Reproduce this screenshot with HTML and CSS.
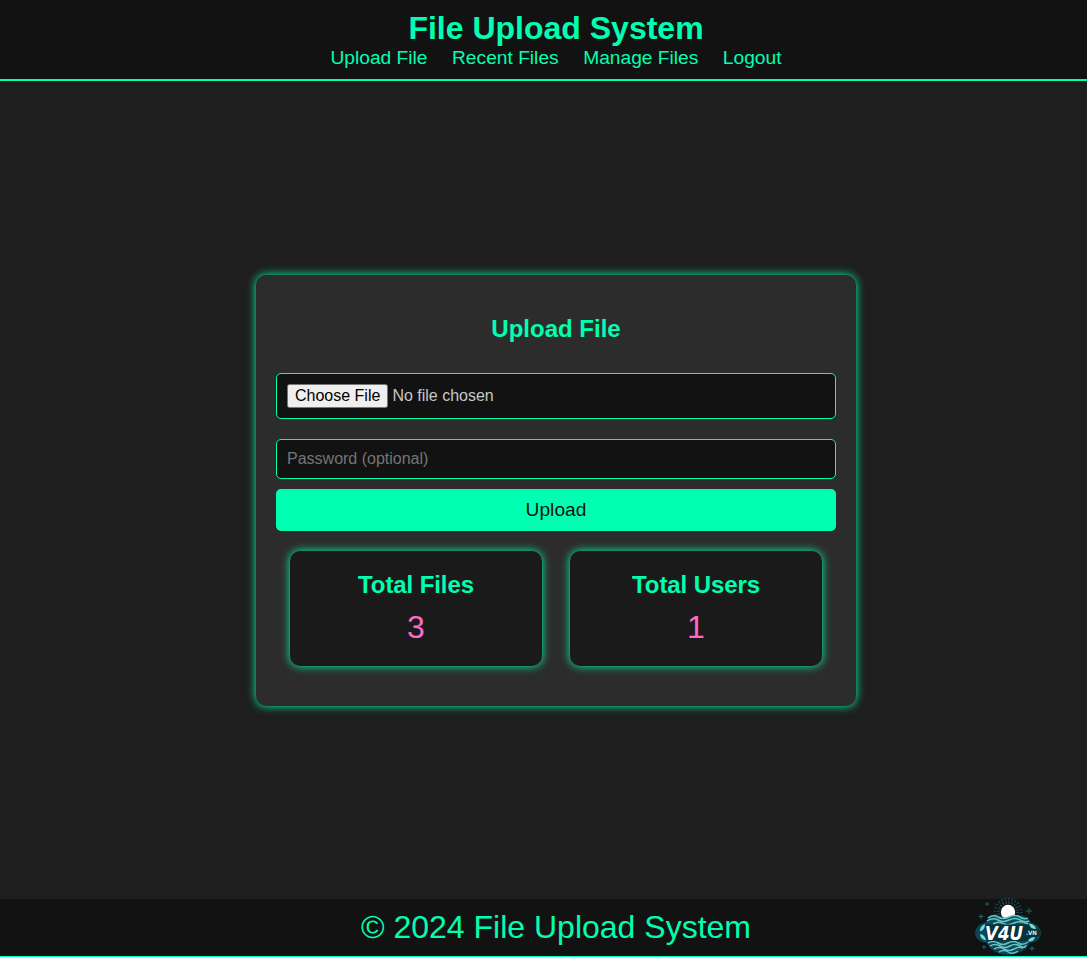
FILE: index.html
```html
<!DOCTYPE html>
<html lang="en">
<head>
<meta charset="utf-8">
<title>File Upload System</title>
<link rel="stylesheet" href="styles.css">
</head>
<body>
<div class="page">
  <header class="header">
    <h1 class="title">File Upload System</h1>
    <nav class="nav">
      <a href="#">Upload File</a>
      <a href="#">Recent Files</a>
      <a href="#">Manage Files</a>
      <a href="#">Logout</a>
    </nav>
  </header>
  <main class="main">
    <section class="card">
      <h2 class="card-title">Upload File</h2>
      <form class="form">
        <input class="field file" type="file">
        <input class="field password" type="password" placeholder="Password (optional)">
        <button class="submit" type="button">Upload</button>
      </form>
      <div class="stats">
        <div class="stat"><h3 class="stat-title">Total Files</h3><p class="stat-value">3</p></div>
        <div class="stat"><h3 class="stat-title">Total Users</h3><p class="stat-value">1</p></div>
      </div>
    </section>
  </main>
  <footer class="footer">
    <p class="copyright">© 2024 File Upload System</p>
    <svg class="logo" viewBox="0 0 68 60" width="68" height="60">
      <g fill="none" stroke="#1c626b" stroke-width="1">
        <circle cx="34" cy="16" r="9.500" stroke-width="2" stroke-dasharray="1.2 1.8"/>
        <circle cx="34" cy="16" r="13" stroke-width="3" stroke-dasharray="1 2.400" stroke="#15505a"/>
        <path d="M13 6v4M11 8h4M7 18v5M4.500 20.500h5M55 12v6M52 15h6M10 49v4M8 51h4M58 50v5M55.500 52.500h5"/>
      </g>
      <path d="M14 22 Q20 17 26 20 Q34 15 42 20 Q48 17 54 22 L56 26 Q67 29 67 37 Q67 45 56 47 Q50 58 34 59 Q18 58 13 47 Q1 45 1 37 Q1 29 12 26Z" fill="#0b4652"/>
      <circle cx="34" cy="16" r="7.200" fill="#fff"/>
      <path d="M13 24 Q18 18 24 21 T35 21 T46 21 T56 24 V29 H13Z" fill="#0c4d59"/>
      <g fill="none" stroke="#67c3c6" stroke-width="1.500">
        <path d="M14 22 Q19 18 24 21 T35 21 T46 21 T54 22"/>
        <path d="M13 25 Q19 21 24 24 T35 24 T46 24 T55 25"/>
        <path d="M19 28 Q24 25 29 27.500 T40 27 T54 28"/>
        <path d="M14 47 Q19 44 24 47 T34 47 T44 47 T54 46"/>
        <path d="M16 50 Q21 47 26 50 T36 50 T46 50 T52 49"/>
        <path d="M20 53 Q25 50 30 53 T40 53 T49 52"/>
        <path d="M25 56 Q30 53 34 56 T44 55"/>
      </g>
      <path d="M12 28.500H53L66 34V40L52 45H13Z" fill="#08333d"/>
      <g fill="#7fd8da">
        <path d="M11 28 Q5.500 30 6 35.500 Q11 34 11 28Z"/>
        <path d="M6 38 Q6 43 12 44.500 Q11 38.500 6 38Z"/>
        <path d="M55 27.500 Q61 28 62 33 Q56 33 55 27.500Z"/>
        <path d="M54 45.500 Q55 41 61 41 Q60 46 54 45.500Z"/>
      </g>
      <text class="logo-name" x="11" y="44" textLength="38" lengthAdjust="spacingAndGlyphs">V4U</text>
      <text class="logo-tld" x="52" y="39" textLength="11" lengthAdjust="spacingAndGlyphs">.VN</text>
    </svg>
  </footer>
</div>
</body>
</html>
```
FILE: styles.css
```css
* { box-sizing: border-box; }
html { overflow: hidden; }
body {
  margin: 0;
  overflow: hidden;
  background: #1e1e1e;
  color: #c7c7c7;
  font-family: Arial, "Liberation Sans", sans-serif;
}
.page {
  display: flex;
  flex-direction: column;
  width: 1112px;
  height: 958px;
}
.header {
  height: 81px;
  padding-top: 10px;
  background: #121212;
  border-bottom: 2px solid #00ffb0;
  text-align: center;
}
.title {
  margin: 0;
  color: #00ffb0;
  font-size: 32px;
  line-height: 36px;
}
.nav {
  display: flex;
  justify-content: center;
  gap: 24.5px;
  font-size: 19.2px;
  line-height: 23px;
}
.nav a { color: #00ffb0; text-decoration: none; }
.main {
  flex: 1;
  display: flex;
  justify-content: center;
  align-items: flex-start;
  padding-top: 194px;
}
.card {
  width: 600px;
  height: 431px;
  padding: 40px 20px;
  background: #2c2c2c;
  border-radius: 10px;
  box-shadow: 0 0 10px #00ffb0;
}
.card-title {
  margin: 0 0 31px;
  color: #00ffb0;
  font-size: 24px;
  line-height: 27px;
  text-align: center;
}
.form { display: flex; flex-direction: column; }
.field {
  width: 100%;
  margin: 0;
  padding: 10px;
  background: #121212;
  border: 1px solid #00ffb0;
  border-radius: 5px;
  color: #c7c7c7;
  font: 16px Arial, "Liberation Sans", sans-serif;
}
.file { height: 46px; margin-bottom: 20px; }
.password { height: 40px; margin-bottom: 10px; }
.password::placeholder { color: #757575; }
.submit {
  height: 42px;
  padding: 0;
  border: 0;
  border-radius: 5px;
  background: #00ffb0;
  color: #121212;
  font: 19.2px Arial, "Liberation Sans", sans-serif;
}
.stats {
  display: flex;
  justify-content: space-around;
  margin-top: 20px;
}
.stat {
  width: 252px;
  height: 115px;
  padding: 20px;
  background: #1a1a1a;
  border-radius: 10px;
  box-shadow: 0 0 10px #00ffb0;
  text-align: center;
}
.stat-title {
  margin: 0 0 11px;
  color: #00ffb0;
  font-size: 24px;
  line-height: 27px;
  letter-spacing: -0.1px;
}
.stat-value {
  margin: 0;
  color: #ff69c4;
  font-size: 32px;
  line-height: 37px;
}
.footer {
  position: relative;
  height: 59px;
  padding-top: 10px;
  background: #121212;
  border-bottom: 2px solid #00ffb0;
  text-align: center;
}
.copyright {
  margin: 0;
  color: #00ffb0;
  font-size: 32px;
  line-height: 36px;
}
.logo { position: absolute; left: 974px; top: -3px; }
.logo-name {
  fill: #fff;
  font: italic bold 19px "DejaVu Sans", sans-serif;
}
.logo-tld {
  fill: #d5eeee;
  font: bold 6px "DejaVu Sans", sans-serif;
}
```
